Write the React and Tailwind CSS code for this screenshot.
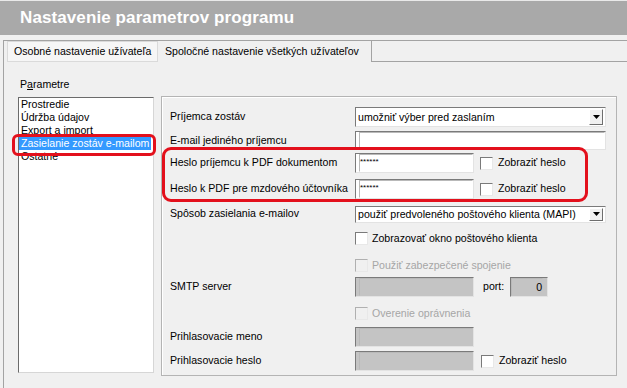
import React from 'react';

// sunken edit box (classic Windows look)
const Edit = ({ className = '', value = '', disabled, right }) => (
  <div
    className={`flex items-center border border-t-[#7a7a7a] border-l-[#7a7a7a] border-r-[#e3e3e3] border-b-[#e3e3e3] ${
      disabled ? 'bg-[#c4c4c4]' : 'bg-white'
    } ${right ? 'justify-end pr-[4px]' : 'pl-[3px]'} ${className}`}
  >
    <div className="h-full w-full flex items-center border border-t-[#b9b9b9] border-l-[#b9b9b9] border-r-transparent border-b-transparent">
      <span className={`leading-none ${value === '******' ? 'text-[8px] -mt-[3px]' : ''} ${right ? 'ml-auto' : ''}`}>{value}</span>
    </div>
  </div>
);

const Combo = ({ className = '', value }) => (
  <div className={`flex items-center border border-t-[#7a7a7a] border-l-[#7a7a7a] border-r-[#e3e3e3] border-b-[#e3e3e3] bg-white ${className}`}>
    <div className="h-full w-full flex items-center pl-[2px] pr-[2px] py-[1px]">
      <span className="flex-1 leading-none">{value}</span>
      <div className="h-full w-[14px] flex items-center justify-center bg-[#f0f0f0] border border-t-white border-l-white border-r-[#6e6e6e] border-b-[#6e6e6e]">
        <svg width="7" height="4" viewBox="0 0 7 4">
          <path d="M0 0h7L3.5 4z" fill="#000" />
        </svg>
      </div>
    </div>
  </div>
);

const Check = ({ disabled }) => (
  <div
    className={`w-[13px] h-[13px] shrink-0 border border-r-[#e8e8e8] border-b-[#e8e8e8] ${
      disabled ? 'bg-[#f0f0f0] border-t-[#b0b0b0] border-l-[#b0b0b0]' : 'bg-white border-t-[#7a7a7a] border-l-[#7a7a7a]'
    }`}
  />
);

const Row = ({ className, label, children }) => (
  <div className={`flex items-center ${className}`}>
    <div className="w-[185px] shrink-0">{label}</div>
    {children}
  </div>
);

export default function App() {
  const items = ['Prostredie', 'Údržba údajov', 'Export a import', 'Zasielanie zostáv e-mailom', 'Ostatné'];

  return (
    <div className="w-[627px] h-[388px] overflow-hidden whitespace-nowrap bg-[#f0f0f0] text-[10.6px] text-black font-['Liberation_Sans',Arial,sans-serif]">
      <div className="h-px bg-[#e9e9e9]" />
      <div className="h-[34px] bg-[#a9a9a9] flex items-center pl-[20px] text-white font-bold text-[17px] tracking-[0.1px]">
        Nastavenie parametrov programu
      </div>

      {/* tab control */}
      <div className="mt-[5px] ml-[3px] border-l border-t border-[#a3a3a3] h-[400px]">
        <div className="flex h-[21px]">
          <div className="ml-[3px] w-[151px] h-[21px] border border-[#dadada] bg-[#f6f6f6] flex items-center pl-[6px]">
            Osobné nastavenie užívateľa
          </div>
          <div className="w-[214px] border-r border-[#a3a3a3] flex items-center pl-[7px]">
            Spoločné nastavenie všetkých užívateľov
          </div>
          <div className="flex-1 border-b border-[#a3a3a3]" />
        </div>

        <div className="flex">
          {/* left column */}
          <div className="pl-[14px] w-[157px]">
            <div className="mt-[16px] leading-[13px] pl-[2px]">
              P<span className="underline">a</span>rametre
            </div>
            <div className="relative mt-[6px] w-[136px] h-[276px] bg-white border border-t-[#6b6b6b] border-l-[#6b6b6b] border-r-[#d6d6d6] border-b-[#d6d6d6]">
              {items.map((t, i) => (
                <div
                  key={t}
                  className={`leading-[13px] pl-[2px] mr-[2px] ${i === 3 ? 'bg-[#3399ff] text-white' : ''}`}
                >
                  {t}
                </div>
              ))}
              <div className="absolute left-[-7px] top-[36px] w-[144px] h-[22px] border-[3px] border-[#e3101c] rounded-[6px]" />
            </div>
          </div>

          {/* group box */}
          <div className="relative mt-[34px] w-[456px] h-[280px] border border-[#b4b4b4] shadow-[inset_1px_1px_0_#ffffff] pl-[8px] pt-[10px] flex flex-col">
            <Row className="h-[20px]" label="Príjemca zostáv">
              <Combo className="w-[251px] h-[20px]" value="umožniť výber pred zaslaním" />
            </Row>
            <Row className="mt-[4px] h-[19px]" label="E-mail jediného príjemcu">
              <Edit className="w-[251px] h-[19px]" />
            </Row>
            <Row className="mt-[3px] h-[20px]" label="Heslo príjemcu k PDF dokumentom">
              <Edit className="w-[119px] h-[20px]" value="******" />
              <div className="ml-[6px]"><Check /></div>
              <span className="ml-[5px]">Zobraziť heslo</span>
            </Row>
            <Row className="mt-[6px] h-[20px]" label="Heslo k PDF pre mzdového účtovníka">
              <Edit className="w-[119px] h-[20px]" value="******" />
              <div className="ml-[6px]"><Check /></div>
              <span className="ml-[5px]">Zobraziť heslo</span>
            </Row>
            <Row className="mt-[7px] h-[16px]" label="Spôsob zasielania e-mailov">
              <Combo className="w-[251px] h-[17px]" value="použiť predvoleného poštového klienta (MAPI)" />
            </Row>
            <Row className="mt-[10px] h-[13px]" label="">
              <Check />
              <span className="ml-[4px]">Zobrazovať okno poštového klienta</span>
            </Row>
            <Row className="mt-[14px] h-[13px]" label="">
              <Check disabled />
              <span className="ml-[4px] text-[#a6a6a6]">Použiť zabezpečené spojenie</span>
            </Row>
            <Row className="mt-[5px] h-[20px]" label="SMTP server">
              <Edit className="w-[119px] h-[20px]" disabled />
              <span className="ml-[9px]">port:</span>
              <Edit className="ml-[6px] w-[38px] h-[20px]" disabled right value="0" />
            </Row>
            <Row className="mt-[10px] h-[13px]" label="">
              <Check disabled />
              <span className="ml-[4px] text-[#a6a6a6]">Overenie oprávnenia</span>
            </Row>
            <Row className="mt-[7px] h-[20px]" label="Prihlasovacie meno">
              <Edit className="w-[119px] h-[20px]" disabled />
            </Row>
            <Row className="mt-[4px] h-[20px]" label="Prihlasovacie heslo">
              <Edit className="w-[119px] h-[20px]" disabled />
              <div className="ml-[7px]"><Check /></div>
              <span className="ml-[5px]">Zobraziť heslo</span>
            </Row>

            <div className="absolute left-[0px] top-[50px] w-[426px] h-[55px] border-[3px] border-[#e3101c] rounded-[9px]" />
          </div>
        </div>
      </div>
    </div>
  );
}
